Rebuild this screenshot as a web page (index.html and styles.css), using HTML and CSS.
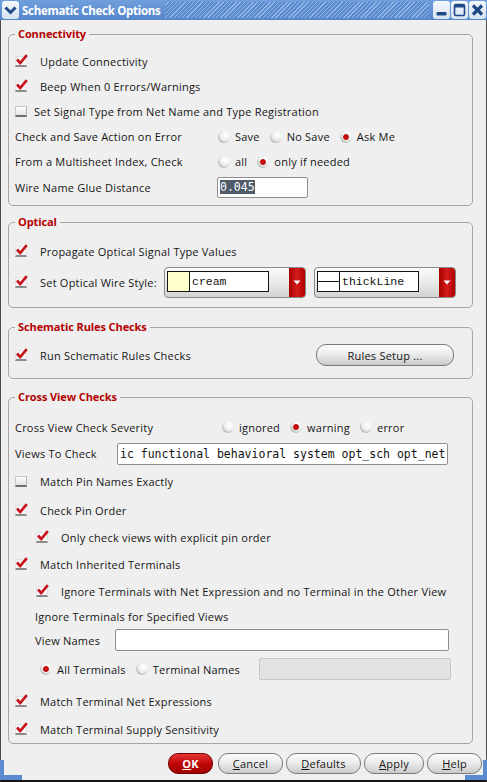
FILE: index.html
```html
<!DOCTYPE html>
<html>
<head>
<meta charset="utf-8">
<title>Schematic Check Options</title>
<link rel="stylesheet" href="styles.css">
</head>
<body>
<div class="window">
  <div class="titlebar">
    <div class="tb-icon tb-menu">
      <svg width="17" height="18" viewBox="0 0 17 18"><path d="M3.5 6.5 L8.5 11.5 L13.5 6.5" fill="none" stroke="#1d4a86" stroke-width="3"/></svg>
    </div>
    <div class="tb-title">Schematic Check Options</div>
    <div class="tb-hatch"></div>
    <div class="tb-icon tb-min">
      <svg width="17" height="18" viewBox="0 0 17 18"><rect x="3.5" y="11" width="10" height="3.5" rx="1" fill="#1d4a86"/></svg>
    </div>
    <div class="tb-icon tb-max">
      <svg width="17" height="18" viewBox="0 0 17 18"><rect x="3.5" y="3.5" width="10" height="11" rx="1.5" fill="none" stroke="#1d4a86" stroke-width="1.6"/><rect x="3.5" y="3.5" width="10" height="3" fill="#1d4a86"/></svg>
    </div>
    <div class="tb-icon tb-close">
      <svg width="17" height="18" viewBox="0 0 17 18"><path d="M4 4.5 L13 13.5 M13 4.5 L4 13.5" stroke="#1d4a86" stroke-width="3.2"/></svg>
    </div>
  </div>

  <div class="body">
    <fieldset class="group g-conn">
      <legend>Connectivity</legend>
      <div class="row h26"><span class="cb on"><svg viewBox="0 0 13 12"><path d="M2 5.5 L5.2 9 L11.8 1.2" fill="none" stroke="#c8101a" stroke-width="2.6"/></svg></span><span class="lbl">Update Connectivity</span></div>
      <div class="row h24"><span class="cb on"><svg viewBox="0 0 13 12"><path d="M2 5.5 L5.2 9 L11.8 1.2" fill="none" stroke="#c8101a" stroke-width="2.6"/></svg></span><span class="lbl">Beep When 0 Errors/Warnings</span></div>
      <div class="row h26"><span class="cb tight"></span><span class="lbl">Set Signal Type from Net Name and Type Registration</span></div>
      <div class="row h25"><span class="lbl lw203">Check and Save Action on Error</span>
        <span class="radios"><span class="rb"></span><span class="rl">Save</span><span class="rb"></span><span class="rl">No Save</span><span class="rb on"></span><span class="rl">Ask Me</span></span></div>
      <div class="row h25"><span class="lbl lw203">From a Multisheet Index, Check</span>
        <span class="radios"><span class="rb"></span><span class="rl">all</span><span class="rb on"></span><span class="rl">only if needed</span></span></div>
      <div class="row h26"><span class="lbl lw202">Wire Name Glue Distance</span><span class="field w91"><span class="sel">0.045</span></span></div>
    </fieldset>

    <fieldset class="group g-opt">
      <legend>Optical</legend>
      <div class="row h26"><span class="cb on"><svg viewBox="0 0 13 12"><path d="M2 5.5 L5.2 9 L11.8 1.2" fill="none" stroke="#c8101a" stroke-width="2.6"/></svg></span><span class="lbl">Propagate Optical Signal Type Values</span></div>
      <div class="row h36"><span class="cb on"><svg viewBox="0 0 13 12"><path d="M2 5.5 L5.2 9 L11.8 1.2" fill="none" stroke="#c8101a" stroke-width="2.6"/></svg></span><span class="lbl lw124">Set Optical Wire Style:</span>
        <div class="combo">
          <div class="combo-field"><span class="swatch cream"></span><span class="combo-text">cream</span></div>
          <div class="combo-arrow"><svg width="8" height="5" viewBox="0 0 8 5"><path d="M0.5 0.5 H7.5 L4 4.5 Z" fill="#fff"/></svg></div>
        </div>
        <div class="combo combo2">
          <div class="combo-field"><span class="swatch linestyle"></span><span class="combo-text">thickLine</span></div>
          <div class="combo-arrow"><svg width="8" height="5" viewBox="0 0 8 5"><path d="M0.5 0.5 H7.5 L4 4.5 Z" fill="#fff"/></svg></div>
        </div>
      </div>
    </fieldset>

    <fieldset class="group g-rules">
      <legend>Schematic Rules Checks</legend>
      <div class="row h26"><span class="cb on"><svg viewBox="0 0 13 12"><path d="M2 5.5 L5.2 9 L11.8 1.2" fill="none" stroke="#c8101a" stroke-width="2.6"/></svg></span><span class="lbl">Run Schematic Rules Checks</span>
        <span class="btn rules-btn">Rules Setup ...</span></div>
    </fieldset>

    <fieldset class="group g-cross">
      <legend>Cross View Checks</legend>
      <div class="row h26"><span class="lbl lw207">Cross View Check Severity</span>
        <span class="radios"><span class="rb"></span><span class="rl">ignored</span><span class="rb on"></span><span class="rl">warning</span><span class="rb"></span><span class="rl">error</span></span></div>
      <div class="row h27"><span class="lbl lw102">Views To Check</span><span class="field w331">ic functional behavioral system opt_sch opt_net</span></div>
      <div class="row h29"><span class="cb"></span><span class="lbl">Match Pin Names Exactly</span></div>
      <div class="row h28"><span class="cb on"><svg viewBox="0 0 13 12"><path d="M2 5.5 L5.2 9 L11.8 1.2" fill="none" stroke="#c8101a" stroke-width="2.6"/></svg></span><span class="lbl">Check Pin Order</span></div>
      <div class="row h27 ind21"><span class="cb on"><svg viewBox="0 0 13 12"><path d="M2 5.5 L5.2 9 L11.8 1.2" fill="none" stroke="#c8101a" stroke-width="2.6"/></svg></span><span class="lbl">Only check views with explicit pin order</span></div>
      <div class="row h27"><span class="cb on"><svg viewBox="0 0 13 12"><path d="M2 5.5 L5.2 9 L11.8 1.2" fill="none" stroke="#c8101a" stroke-width="2.6"/></svg></span><span class="lbl">Match Inherited Terminals</span></div>
      <div class="row h26 ind21"><span class="cb on"><svg viewBox="0 0 13 12"><path d="M2 5.5 L5.2 9 L11.8 1.2" fill="none" stroke="#c8101a" stroke-width="2.6"/></svg></span><span class="lbl">Ignore Terminals with Net Expression and no Terminal in the Other View</span></div>
      <div class="row h24 ind20"><span class="lbl">Ignore Terminals for Specified Views</span></div>
      <div class="row h24 ind20"><span class="lbl lw80">View Names</span><span class="field w334"></span></div>
      <div class="row h34 ind25"><span class="radios"><span class="rb on"></span><span class="rl">All Terminals</span><span class="rb"></span><span class="rl">Terminal Names</span></span><span class="field disabled w192"></span></div>
      <div class="row h30"><span class="cb on"><svg viewBox="0 0 13 12"><path d="M2 5.5 L5.2 9 L11.8 1.2" fill="none" stroke="#c8101a" stroke-width="2.6"/></svg></span><span class="lbl">Match Terminal Net Expressions</span></div>
      <div class="row h27"><span class="cb on"><svg viewBox="0 0 13 12"><path d="M2 5.5 L5.2 9 L11.8 1.2" fill="none" stroke="#c8101a" stroke-width="2.6"/></svg></span><span class="lbl">Match Terminal Supply Sensitivity</span></div>
    </fieldset>

    <div class="buttons">
      <span class="btn ok w45"><u>O</u>K</span>
      <span class="btn w65"><u>C</u>ancel</span>
      <span class="btn w75"><u>D</u>efaults</span>
      <span class="btn w60"><u>A</u>pply</span>
      <span class="btn w55"><u>H</u>elp</span>
    </div>
  </div>
  <span class="corner corner-l"></span>
  <span class="corner corner-r"></span>
</div>
</body>
</html>
```

FILE: styles.css
```css
html, body {
  margin: 0;
  padding: 0;
  background: #efefef;
}
body {
  font-family: "Open Sans", "DejaVu Sans", sans-serif;
  font-size: 11px;
  letter-spacing: 0.22px;
  color: #161616;
}
.window {
  position: relative;
  width: 487px;
  height: 782px;
  display: flex;
  flex-direction: column;
  overflow: hidden;
  background: #efefef;
}

/* title bar */
.titlebar {
  flex: none;
  height: 20px;
  display: flex;
  align-items: center;
  background: linear-gradient(#6f9fdc, #5486cb);
  box-sizing: border-box;
  padding: 1px 1px 1px 2px;
}
.tb-icon {
  width: 17px;
  height: 18px;
  background: linear-gradient(#f4f8fd, #d6e2f2);
  border-radius: 3px;
  flex: none;
}
.tb-icon svg { display: block; }
.tb-min { margin-left: 4px; }
.tb-max, .tb-close { margin-left: 1px; }
.tb-title {
  margin-left: 3px;
  color: #fff;
  font-weight: bold;
  font-size: 11.5px;
  white-space: nowrap;
  letter-spacing: -0.3px;
}
.tb-hatch {
  flex: 1;
  height: 16px;
  margin-left: 5px;
  background: repeating-linear-gradient(135deg, #5b8bcf 0 2px, #93b8e6 2px 3px);
}

/* body */
.body {
  flex: 1;
  border-left: 1px solid #4c4c4c;
  border-right: 1px solid #4c4c4c;
  border-bottom: 2px solid #141414;
  padding: 7px 0 0 7px;
  display: flex;
  flex-direction: column;
}
.group {
  margin: 0 13px 0 0;
  border: 1px solid #a6a6a6;
  border-radius: 5px;
  padding: 0 6px;
  min-width: 0;
}
.group legend {
  padding: 0 3px;
  font-weight: bold;
  font-size: 11px;
  line-height: 14px;
  color: #b40000;
  letter-spacing: -0.1px;
}
.g-conn { padding-top: 7px; padding-bottom: 5px; margin-bottom: 9px; }
.g-opt { padding-top: 9px; padding-bottom: 7px; margin-bottom: 12px; }
.g-rules { padding-top: 8px; padding-bottom: 10px; margin-bottom: 11px; }
.g-cross { padding-top: 10px; padding-bottom: 0; }

.row {
  display: flex;
  align-items: center;
  white-space: nowrap;
}
.h24 { height: 24px; }
.h25 { height: 25px; }
.h26 { height: 26px; }
.h27 { height: 27px; }
.h28 { height: 28px; }
.h29 { height: 29px; }
.h30 { height: 30px; }
.h34 { height: 34px; }
.h36 { height: 36px; }
.ind20 { padding-left: 20px; }
.ind21 { padding-left: 21px; }
.ind25 { padding-left: 25px; }

.lbl { flex: none; }
.lw80 { width: 80px; }
.lw102 { width: 102px; }
.lw124 { width: 124px; }
.lw202 { width: 202px; }
.lw203 { width: 203px; }
.lw207 { width: 207px; }

/* checkbox */
.cb {
  flex: none;
  width: 12px;
  height: 11px;
  box-sizing: border-box;
  margin-right: 13px;
  background: linear-gradient(#fdfdfd, #e4e4e4);
  border: 1px solid #c9c9c9;
  border-bottom: 2px solid #707070;
  border-right-color: #b4b4b4;
  position: relative;
}
.cb.tight { margin-right: 7px; }
.cb.on {
  background: #f6f6f6;
  border-color: #e2e2e2;
  border-bottom-color: #8a8a8a;
}
.cb svg {
  position: absolute;
  left: -1px;
  top: -3px;
  width: 13px;
  height: 12px;
}

/* radio */
.radios {
  display: flex;
  align-items: center;
}
.rb {
  flex: none;
  width: 12px;
  height: 12px;
  border-radius: 50%;
  margin-right: 5px;
  background: radial-gradient(circle at 62% 32%, #ffffff 0, #f4f4f4 35%, #d8d8d8 70%, #a9a9a9 100%);
  box-shadow: inset 1px -1px 1px rgba(0,0,0,0.12);
}
.rb.on {
  background:
    radial-gradient(circle at 50% 50%, #e01818 0, #b80000 2.4px, rgba(180,0,0,0) 3.4px),
    radial-gradient(circle at 62% 32%, #ffffff 0, #f4f4f4 35%, #d8d8d8 70%, #a9a9a9 100%);
}
.rl { margin-right: 10px; }

/* text fields */
.field {
  flex: none;
  box-sizing: border-box;
  height: 22px;
  border: 1px solid #8e8e8e;
  border-radius: 2px;
  background: #fff;
  font-family: "DejaVu Sans Mono", "Liberation Mono", monospace;
  font-size: 11.5px;
  letter-spacing: 0;
  line-height: 20px;
  padding-left: 2px;
  overflow: hidden;
  white-space: nowrap;
  color: #111;
}
.w91 { width: 91px; height: 21px; line-height: 19px; }
.w331 { width: 331px; }
.w334 { width: 334px; }
.w192 { width: 192px; }
.field.disabled {
  background: #e3e3e3;
  border-color: #c6c6c6;
  margin-left: auto;
  margin-right: 15px;
}
.sel {
  background: #4f5b69;
  color: #fff;
}

/* combo boxes */
.combo {
  flex: none;
  width: 142px;
  height: 31px;
  box-sizing: border-box;
  border: 1px solid #8a8a8a;
  border-radius: 4px;
  background: linear-gradient(#fbfbfb, #e6e6e6 60%, #d2d2d2);
  display: flex;
  overflow: hidden;
}
.combo2 { margin-left: 8px; }
.combo-field {
  width: 102px;
  height: 21px;
  box-sizing: border-box;
  margin: 3px 0 0 2px;
  border: 1px solid #141414;
  background: #fff;
  display: flex;
}
.swatch {
  width: 21px;
  flex: none;
  border-right: 1px solid #141414;
}
.cream { background: #ffffcc; }
.linestyle {
  background: linear-gradient(#fff 9px, #141414 9px, #141414 10px, #fff 10px);
}
.combo-text {
  font-family: "Liberation Mono", "DejaVu Sans Mono", monospace;
  font-size: 11.5px;
  letter-spacing: 0;
  line-height: 19px;
  padding-left: 2px;
  color: #111;
}
.combo-arrow {
  margin-left: auto;
  width: 16px;
  background: linear-gradient(90deg, #a80000, #d41c1c 50%, #b00000);
  display: flex;
  align-items: center;
  justify-content: center;
}
.combo-arrow svg { display: block; }

/* buttons */
.btn {
  flex: none;
  height: 21px;
  box-sizing: border-box;
  border: 1px solid #7b7b7b;
  border-radius: 10px;
  background: linear-gradient(#fcfcfc, #ececec 45%, #d8d8d8 80%, #c9c9c9);
  display: flex;
  align-items: center;
  justify-content: center;
  color: #161616;
  white-space: nowrap;
}
.rules-btn {
  width: 138px;
  height: 22px;
  margin-left: auto;
  margin-right: 12px;
}
.buttons {
  display: flex;
  justify-content: flex-end;
  padding-right: 4px;
  margin-top: 9px;
  gap: 3px;
}
.btn u { text-decoration: underline; text-underline-offset: 1px; }
.btn.ok {
  margin-right: 2px;
  background: linear-gradient(#e53535, #c00808 50%, #a00000);
  border-color: #6e0000;
  color: #fff;
  font-weight: bold;
}
.w45 { width: 45px; }
.w55 { width: 55px; }
.w60 { width: 60px; }
.w65 { width: 65px; }
.w75 { width: 75px; }

/* resize corners of the frame */
.corner {
  position: absolute;
  bottom: 2px;
  width: 22px;
  height: 20px;
  box-sizing: border-box;
  border-bottom: 5px solid #5a8ad0;
}
.corner-l { left: 0; border-left: 4px solid #5a8ad0; }
.corner-r { right: 0; border-right: 4px solid #5a8ad0; }
```
